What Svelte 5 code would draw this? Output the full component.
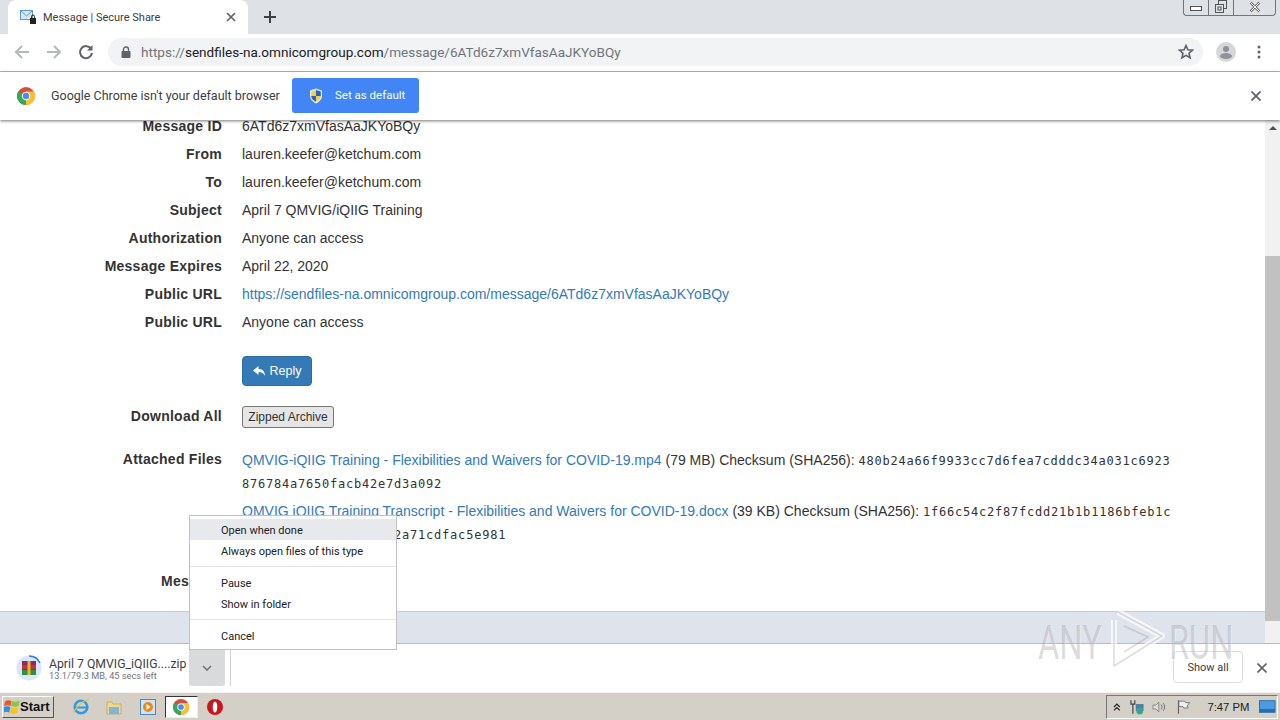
<script lang="ts">
	const rows = [
		{ label: 'From', value: 'lauren.keefer@ketchum.com' },
		{ label: 'To', value: 'lauren.keefer@ketchum.com' },
		{ label: 'Subject', value: 'April 7 QMVIG/iQIIG Training' },
		{ label: 'Authorization', value: 'Anyone can access' },
		{ label: 'Message Expires', value: 'April 22, 2020' },
		{ label: 'Public URL', value: 'https://sendfiles-na.omnicomgroup.com/message/6ATd6z7xmVfasAaJKYoBQy', link: true },
		{ label: 'Public URL', value: 'Anyone can access' }
	];
</script>

<div class="screen">
	<div class="tabstrip">
		<div class="tab">
			<svg class="favicon" width="18" height="16" viewBox="0 0 18 16">
				<rect x="0.5" y="1.5" width="12" height="9" fill="#d6e8f5" stroke="#5b9bc8" />
				<path d="M1 2l5.500 5 5.500-5" fill="none" stroke="#5b9bc8" />
				<rect x="10" y="9" width="6" height="6" fill="#222" />
				<path d="M11.500 9V7.500a1.500 1.500 0 0 1 3 0V9" fill="none" stroke="#222" />
			</svg>
			<span class="tab-title">Message | Secure Share</span>
			<svg class="tab-close" width="10" height="10" viewBox="0 0 10 10">
				<path d="M1 1l8 8M9 1l-8 8" stroke="#5f6368" stroke-width="1.700" />
			</svg>
		</div>
		<svg class="newtab" width="12" height="12" viewBox="0 0 12 12">
			<path d="M6 0v12M0 6h12" stroke="#3c4043" stroke-width="2" />
		</svg>
		<div class="winctl">
			<span class="winbtn min"><svg width="12" height="6" viewBox="0 0 12 6"><rect x="0.500" y="0.500" width="11" height="4" fill="#fff" stroke="#555" /></svg></span>
			<span class="winbtn max"><svg width="14" height="14" viewBox="0 0 14 14"><rect x="4.500" y="0.500" width="8" height="8" fill="none" stroke="#555" /><rect x="1.500" y="4.500" width="8" height="8" fill="#dee1e6" stroke="#555" /><rect x="4" y="7" width="3" height="3" fill="none" stroke="#555" /></svg></span>
			<span class="winbtn cls"><svg width="12" height="12" viewBox="0 0 12 12"><path d="M1.500 1.500l9 9M10.500 1.500l-9 9" stroke="#777" stroke-width="2.500" /><path d="M1.500 1.500l9 9M10.500 1.500l-9 9" stroke="#fff" stroke-width="1" /></svg></span>
		</div>
	</div>

	<div class="toolbar">
		<svg class="navicon" width="16" height="16" viewBox="0 0 16 16"><path d="M15 8H2M8 2L2 8l6 6" fill="none" stroke="#b4b7bb" stroke-width="2" /></svg>
		<svg class="navicon" width="16" height="16" viewBox="0 0 16 16"><path d="M1 8h13M8 2l6 6-6 6" fill="none" stroke="#b4b7bb" stroke-width="2" /></svg>
		<svg class="navicon" width="16" height="16" viewBox="0 0 16 16"><path d="M13.300 5.200A6 6 0 1 0 14 9" fill="none" stroke="#5f6368" stroke-width="2" /><path d="M14.500 1v5.500H9z" fill="#5f6368" /></svg>
		<div class="omnibox">
			<svg width="10" height="12" viewBox="0 0 10 12"><rect x="0.500" y="5" width="9" height="7" rx="1" fill="#5f6368" /><path d="M2.500 5V3.500a2.500 2.500 0 0 1 5 0V5" fill="none" stroke="#5f6368" stroke-width="1.400" /></svg>
			<span class="url"><span class="dim">https://</span>sendfiles-na.omnicomgroup.com<span class="dim">/message/6ATd6z7xmVfasAaJKYoBQy</span></span>
			<svg class="star" width="16" height="16" viewBox="0 0 16 16"><path d="M8 1.500l1.900 4.300 4.600.4-3.500 3 1.100 4.600L8 11.400 3.900 13.800 5 9.200l-3.500-3 4.600-.4z" fill="none" stroke="#5f6368" stroke-width="1.600" /></svg>
		</div>
		<svg class="avatar" width="20" height="20" viewBox="0 0 20 20"><circle cx="10" cy="10" r="10" fill="#d5d7da" /><circle cx="10" cy="7" r="3" fill="#8f9296" /><ellipse cx="10" cy="14" rx="6" ry="3" fill="#8f9296" /></svg>
		<svg class="kebab" width="4" height="14" viewBox="0 0 4 14"><circle cx="2" cy="2" r="1.500" fill="#5f6368" /><circle cx="2" cy="7" r="1.500" fill="#5f6368" /><circle cx="2" cy="12" r="1.500" fill="#5f6368" /></svg>
	</div>

	<div class="infobar">
		<svg class="chrome-logo" width="18" height="18" viewBox="0 0 18 18">
			<circle cx="9" cy="9" r="9" fill="#dd4b39" />
			<path d="M9 9L1.200 4.500A9 9 0 0 0 9 18z" fill="#3aa757" />
			<path d="M9 9l0 9A9 9 0 0 0 16.800 4.500H9z" fill="#fbc02d" />
			<circle cx="9" cy="9" r="4.200" fill="#fff" />
			<circle cx="9" cy="9" r="3.200" fill="#4a8cf0" />
		</svg>
		<span class="info-text">Google Chrome isn't your default browser</span>
		<button class="default-btn">
			<svg width="14" height="16" viewBox="0 0 14 16"><path d="M7 0.500l6 2v5c0 4-3 6.500-6 8-3-1.500-6-4-6-8v-5z" fill="#e9edf5" /><path d="M7 2l4.800 1.600V8H7z" fill="#2b62c4" /><path d="M2.200 8H7v5.800C4.500 12.500 2.200 10.800 2.200 8z" fill="#2b62c4" /><path d="M7 2v6H2.200V3.600zM7 8h4.800c0 2.800-2.300 4.500-4.800 5.800z" fill="#f4d03f" /></svg>
			<span class="default-label">Set as default</span>
		</button>
		<svg class="info-close" width="10" height="10" viewBox="0 0 10 10"><path d="M0.500 0.500l9 9M9.500 0.500l-9 9" stroke="#5f6368" stroke-width="1.800" /></svg>
	</div>

	<div class="viewport">
		<div class="page">
			<div class="content">
				<div class="row"><div class="label">Message ID</div><div class="value">6ATd6z7xmVfasAaJKYoBQy</div></div>
				{#each rows as row}
					<div class="row">
						<div class="label">{row.label}</div>
						<div class="value">
							{#if row.link}<a href="#top">{row.value}</a>{:else}{row.value}{/if}
						</div>
					</div>
				{/each}
				<div class="row reply-row">
					<div class="label"></div>
					<div class="value">
						<button class="reply">
							<svg width="13" height="11" viewBox="0 0 13 11"><path d="M5.500 0L0 4.500 5.500 9V6.200c3 0 5 .6 6.500 3.800 0-4.500-2.500-7-6.500-7z" fill="#fff" /></svg>
							Reply
						</button>
					</div>
				</div>
				<div class="row zip-row">
					<div class="label">Download All</div>
					<div class="value"><button class="zip">Zipped Archive</button></div>
				</div>
				<div class="row files-row">
					<div class="label">Attached Files</div>
					<div class="value files">
						<p><a href="#top">QMVIG-iQIIG Training - Flexibilities and Waivers for COVID-19.mp4</a> (79 MB) Checksum (SHA256): <code>480b24a66f9933cc7d6fea7cdddc34a031c6923876784a7650facb42e7d3a092</code></p>
						<p><a href="#top">QMVIG iQIIG Training Transcript - Flexibilities and Waivers for COVID-19.docx</a> (39 KB) Checksum (SHA256): <code>1f66c54c2f87fcdd21b1b1186bfeb1cd8e64a90b37c1e5f0a42a71cdfac5e981</code></p>
					</div>
				</div>
				<div class="row message-row">
					<div class="label">Message</div>
					<div class="value"></div>
				</div>
			</div>
			<div class="page-footer"></div>
		</div>
		<div class="scrollbar">
			<span class="arrow"></span>
			<span class="thumb"></span>
		</div>
	</div>

	<div class="downloads">
		<svg class="rar" width="26" height="26" viewBox="0 0 26 26">
			<circle cx="13" cy="13" r="12.500" fill="#d9e6fb" />
			<path d="M13 1a12 12 0 0 1 11 7" fill="none" stroke="#3b78d8" stroke-width="1.500" />
			<rect x="6" y="6" width="14" height="14" fill="#8a2b63" />
			<rect x="6" y="10" width="14" height="4" fill="#c0392b" />
			<rect x="6" y="15" width="14" height="5" fill="#2f8f46" />
			<rect x="11.500" y="6" width="3" height="14" fill="#e8b33a" />
		</svg>
		<div class="dl-text">
			<div class="dl-name">April 7 QMVIG_iQIIG....zip</div>
			<div class="dl-status">13.1/79.3 MB, 45 secs left</div>
		</div>
		<div class="dl-caret">
			<svg width="10" height="6" viewBox="0 0 10 6"><path d="M1 1l4 4 4-4" fill="none" stroke="#70757a" stroke-width="1.600" /></svg>
		</div>
		<div class="dl-sep"></div>
		<button class="show-all">Show all</button>
		<svg class="dl-close" width="10" height="10" viewBox="0 0 10 10"><path d="M0.500 0.500l9 9M9.500 0.500l-9 9" stroke="#5f6368" stroke-width="1.600" /></svg>
	</div>

	<div class="taskbar">
		<button class="start">
			<svg width="16" height="15" viewBox="0 0 16 15"><path d="M1 2.500C3 1 5 1 7.500 2l-1 5C4.500 6 3 6 0 7z" fill="#e8562a" /><path d="M8 2c2.500 1 4.500 1 7.500-.5l-1 5.500c-2.500 1-4.500 1-7.500 0z" fill="#8cc63f" /><path d="M0 8c2.500-1 4-1 6.300 0l-1 5.500C3 12.500 2 12.500 0 13.500z" fill="#2f8fe0" /><path d="M7 8.500c2.500 1 4.500 1 7 0l-1 5.500c-2.500 1-4.500 1-7 0z" fill="#f6c21c" /></svg>
			<span>Start</span>
		</button>
		<div class="task-icons">
			<span class="task"><svg width="18" height="18" viewBox="0 0 18 18"><circle cx="9" cy="9" r="6.300" fill="none" stroke="#2f9be0" stroke-width="2.600" /><path d="M4 9.500h10" stroke="#2f9be0" stroke-width="2" /><path d="M1 15C5 8 11 3 17 1" fill="none" stroke="#e8c04a" stroke-width="1.300" /></svg></span>
			<span class="task"><svg width="16" height="16" viewBox="0 0 16 16"><path d="M1 3h5l1 2h8v10H1z" fill="#f3d98b" stroke="#b9a05a" stroke-width="0.700" /><rect x="3" y="8" width="10" height="7" fill="#7fb7d9" /></svg></span>
			<span class="task"><svg width="16" height="16" viewBox="0 0 16 16"><rect x="0.500" y="0.500" width="15" height="15" fill="#cfe3f5" stroke="#4a88bf" /><circle cx="8" cy="8" r="5" fill="#e88a1a" /><path d="M6.500 5l4 3-4 3z" fill="#fff" /></svg></span>
			<span class="task active"><svg width="16" height="16" viewBox="0 0 18 18"><circle cx="9" cy="9" r="9" fill="#dd4b39" /><path d="M9 9L1.200 4.500A9 9 0 0 0 9 18z" fill="#3aa757" /><path d="M9 9l0 9A9 9 0 0 0 16.800 4.500H9z" fill="#fbc02d" /><circle cx="9" cy="9" r="4.200" fill="#fff" /><circle cx="9" cy="9" r="3.200" fill="#4a8cf0" /></svg></span>
			<span class="task"><svg width="16" height="16" viewBox="0 0 16 16"><circle cx="8" cy="8" r="8" fill="#c8161d" /><ellipse cx="8" cy="8" rx="2.300" ry="5.500" fill="#fff" /></svg></span>
		</div>
		<div class="tray">
			<svg width="8" height="8" viewBox="0 0 8 8"><path d="M1 4l3-3 3 3M1 7.500l3-3 3 3" fill="none" stroke="#222" stroke-width="1.200" /></svg>
			<svg width="16" height="16" viewBox="0 0 16 16"><path d="M2 1v4h4V1M4 5v10" fill="none" stroke="#444" stroke-width="1.200" /><rect x="7" y="5" width="8" height="7" fill="#4a7fa8" /><circle cx="11" cy="12" r="3.500" fill="#37a58c" /></svg>
			<svg width="16" height="14" viewBox="0 0 16 14"><path d="M1 5h3l3-3v10L4 9H1z" fill="#ddd" stroke="#777" stroke-width="0.800" /><path d="M9.500 4.500a4 4 0 0 1 0 5M11.500 3a6 6 0 0 1 0 8" fill="none" stroke="#777" /></svg>
			<svg width="16" height="16" viewBox="0 0 16 16"><path d="M2.500 1v14" stroke="#555" /><path d="M3 2h6l1 1.500h4L11.500 7l1 2H8L7 7.500H3z" fill="#eee" stroke="#666" stroke-width="0.800" /></svg>
			<span class="clock">7:47 PM</span>
			<svg width="17" height="13" viewBox="0 0 17 13"><rect width="17" height="13" fill="#2a6cb0" /><rect x="1" y="1" width="15" height="8" fill="#4d9be0" /></svg>
		</div>
	</div>

	<div class="menu">
		<div class="item hot">Open when done</div>
		<div class="item">Always open files of this type</div>
		<div class="menu-sep"></div>
		<div class="item">Pause</div>
		<div class="item">Show in folder</div>
		<div class="menu-sep"></div>
		<div class="item">Cancel</div>
	</div>

	<div class="watermark">
		<span class="wm-word">ANY</span>
		<svg class="wm-mark" width="62" height="62" viewBox="0 0 62 62">
			<path d="M14 4l44 24-48 30V12" fill="none" stroke="#fff" stroke-opacity="0.700" stroke-width="6" stroke-linejoin="round" />
			<path d="M14 4l44 24-48 30V12M20 18l24 11-24 15" fill="none" stroke="#8d8f94" stroke-opacity="0.300" stroke-width="1.500" stroke-linejoin="round" />
		</svg>
		<span class="wm-word">RUN</span>
	</div>
</div>

<style>
	:global(body) {
		margin: 0;
	}

	.screen {
		position: relative;
		width: 1280px;
		height: 720px;
		overflow: hidden;
		display: flex;
		flex-direction: column;
		background: #fff;
		font-family: 'Liberation Sans', Arial, sans-serif;
	}

	.tabstrip {
		position: relative;
		flex: none;
		height: 34px;
		background: #dee1e6;
		display: flex;
		align-items: flex-end;
		padding-left: 8px;
	}

	.tab {
		width: 240px;
		height: 34px;
		background: #fff;
		border-radius: 8px 8px 0 0;
		display: flex;
		align-items: center;
		padding: 0 12px;
		box-sizing: border-box;
		gap: 5px;
	}

	.favicon {
		flex: none;
	}

	.tab-title {
		flex: 1;
		font: 11px Roboto, sans-serif;
		color: #3c4043;
	}

	.tab-close {
		flex: none;
	}

	.newtab {
		align-self: center;
		margin-left: 16px;
	}

	.winctl {
		position: absolute;
		top: -1px;
		right: 4px;
		height: 17px;
		width: 93px;
		display: flex;
		box-sizing: border-box;
		border: 1px solid #70757a;
		border-top: 0;
		border-radius: 0 0 4px 4px;
	}

	.winbtn {
		display: flex;
		align-items: center;
		justify-content: center;
	}

	.min {
		width: 25px;
		border-right: 1px solid #70757a;
		padding-top: 3px;
		box-sizing: border-box;
	}

	.max {
		width: 25px;
		border-right: 1px solid #70757a;
		box-sizing: border-box;
	}

	.cls {
		flex: 1;
	}

	.toolbar {
		flex: none;
		height: 38px;
		box-sizing: border-box;
		background: #fff;
		border-bottom: 1px solid #b9babb;
		display: flex;
		align-items: center;
		padding: 0 14px 1px;
	}

	.navicon {
		flex: none;
		margin-right: 16px;
	}

	.omnibox {
		flex: 1;
		height: 28px;
		margin-left: -2px;
		border-radius: 14px;
		background: #f1f3f4;
		display: flex;
		align-items: center;
		padding: 0 9px 0 13px;
		gap: 8px;
	}

	.url {
		flex: 1;
		font: 13.550px Roboto, sans-serif;
		color: #202124;
		margin-left: 2px;
	}

	.dim {
		color: #70757a;
	}

	.avatar {
		flex: none;
		margin-left: 13px;
	}

	.kebab {
		flex: none;
		margin-left: 21px;
		margin-right: 5px;
	}

	.infobar {
		flex: none;
		height: 48px;
		box-sizing: border-box;
		display: flex;
		align-items: center;
		padding: 0 18px 1px 17px;
		background: #fff;
		box-shadow: 0 1px 3px rgba(0, 0, 0, 0.55);
		position: relative;
		z-index: 1;
	}

	.chrome-logo {
		flex: none;
	}

	.info-text {
		margin-left: 16px;
		width: 228px;
		white-space: nowrap;
		font: 12.500px Roboto, sans-serif;
		color: #3c4043;
	}

	.default-btn {
		margin-left: 13px;
		width: 127px;
		height: 35px;
		border: 0;
		border-radius: 3px;
		background: #4285f4;
		color: #fff;
		font: 11.500px Roboto, sans-serif;
		display: flex;
		align-items: center;
		padding: 0 0 0 17px;
		gap: 12px;
	}

	.default-label {
		margin-bottom: 2px;
	}

	.info-close {
		margin-left: auto;
		margin-right: 1px;
	}

	.viewport {
		flex: 1;
		min-height: 0;
		display: flex;
		overflow: hidden;
	}

	.page {
		flex: 1;
		display: flex;
		flex-direction: column;
		min-width: 0;
	}

	.content {
		flex: 1;
		margin-top: -8px;
		font-size: 14px;
		color: #333;
	}

	.row {
		display: flex;
		min-height: 28px;
		line-height: 28px;
	}

	.label {
		flex: none;
		width: 222px;
		text-align: right;
		font-weight: 700;
		letter-spacing: 0.25px;
	}

	.value {
		margin-left: 20px;
		flex: 1;
		min-width: 0;
	}

	a {
		color: #337ab7;
		text-decoration: none;
	}

	.reply-row {
		margin-top: 20px;
		line-height: 1;
	}

	.reply {
		width: 70px;
		height: 30px;
		background: #337ab7;
		border: 1px solid #2e6da4;
		border-radius: 4px;
		color: #fff;
		font: 12.500px 'Liberation Sans', sans-serif;
		display: flex;
		align-items: center;
		justify-content: center;
		gap: 4px;
		padding: 0;
	}

	.zip-row {
		margin-top: 17px;
	}

	.zip-row .label,
	.files-row .label {
		line-height: 26px;
	}

	.zip-row .value {
		display: flex;
		align-items: flex-start;
	}

	.zip {
		width: 92px;
		height: 22px;
		margin-top: 3px;
		padding: 0;
		background: #e6e6e6;
		border: 1px solid #767676;
		border-radius: 3px;
		font: 12px 'Liberation Sans', sans-serif;
		color: #333;
	}

	.files-row {
		margin-top: 15px;
	}

	.files {
		width: 933px;
		flex: none;
		line-height: 23px;
		padding-top: 3px;
	}

	.files p {
		margin: 0 0 5px;
	}

	code {
		font-family: 'DejaVu Sans Mono', monospace;
		font-size: 12px;
		line-height: 1;
		letter-spacing: 0.78px;
		word-break: break-all;
	}

	.message-row {
		margin-top: 16px;
	}

	.page-footer {
		flex: none;
		height: 32px;
		box-sizing: border-box;
		background: #dfe3ec;
		border-top: 1px solid #c9ccd1;
	}

	.scrollbar {
		flex: none;
		width: 15px;
		background: #f1f1f1;
		display: flex;
		flex-direction: column;
		align-items: center;
	}

	.arrow {
		margin-top: 6px;
		width: 0;
		height: 0;
		border: 4px solid transparent;
		border-top: 0;
		border-bottom: 4px solid #505050;
	}

	.thumb {
		margin-top: 126px;
		width: 100%;
		height: 365px;
		background: #c1c1c1;
	}

	.downloads {
		flex: none;
		height: 49px;
		box-sizing: border-box;
		background: #fff;
		border-top: 1px solid #b9babb;
		display: flex;
		align-items: center;
		padding-left: 16px;
		position: relative;
	}

	.rar {
		flex: none;
	}

	.dl-text {
		margin-left: 7px;
		width: 140px;
		padding-top: 3px;
		white-space: nowrap;
	}

	.dl-name {
		font: 12.250px/13px Roboto, sans-serif;
		color: #3c4043;
	}

	.dl-status {
		font: 9.250px/10px Roboto, sans-serif;
		color: #70757a;
	}

	.dl-caret {
		width: 36px;
		height: 36px;
		background: #d9dadb;
		border-radius: 0 0 3px 3px;
		display: flex;
		align-items: center;
		justify-content: center;
	}

	.dl-sep {
		width: 1px;
		height: 36px;
		margin-left: 5px;
		background: #d0d2d4;
	}

	.show-all {
		margin-left: auto;
		margin-bottom: 2px;
		width: 70px;
		height: 32px;
		border: 1px solid #dadce0;
		border-radius: 4px;
		background: #fff;
		font: 11px Roboto, sans-serif;
		color: #3c4043;
		padding: 0;
	}

	.dl-close {
		margin: 0 13px 0 14px;
		flex: none;
	}

	.taskbar {
		flex: none;
		height: 28px;
		box-sizing: border-box;
		background: #d4d0c8;
		border-top: 1px solid #f5f4f0;
		display: flex;
		align-items: center;
		padding-left: 2px;
	}

	.start {
		width: 52px;
		height: 22px;
		padding: 0 0 0 1px;
		background: #d4d0c8;
		border: 1px solid;
		border-color: #fff #555 #555 #fff;
		display: flex;
		align-items: center;
		gap: 0;
		font: 700 13px 'Liberation Sans', sans-serif;
		color: #111;
	}

	.task-icons {
		display: flex;
		align-items: center;
		margin-left: 10px;
	}

	.task {
		width: 33.500px;
		height: 22px;
		display: flex;
		align-items: center;
		justify-content: center;
		box-sizing: border-box;
	}

	.active {
		background: #fff;
		border: 1px solid;
		border-color: #333 #eee #eee #333;
	}

	.tray {
		margin-left: auto;
		margin-right: 2px;
		width: 172px;
		height: 24px;
		box-sizing: border-box;
		border: 1px solid;
		border-color: #777 #fff #fff #777;
		display: flex;
		align-items: center;
		padding: 0 1px 0 6px;
		gap: 8px;
	}

	.clock {
		margin-left: 8px;
		margin-right: 2px;
		white-space: nowrap;
		font: 11.300px 'Liberation Sans', sans-serif;
		color: #222;
	}

	.menu {
		position: absolute;
		left: 189px;
		top: 515px;
		width: 208px;
		height: 135px;
		box-sizing: border-box;
		background: #fff;
		border: 1px solid #bfc1c4;
		padding-top: 3px;
		z-index: 3;
		font: 11px Roboto, sans-serif;
		color: #202124;
	}

	.item {
		height: 21px;
		line-height: 23px;
		padding-left: 31px;
	}

	.hot {
		background: #e8e9ec;
	}

	.menu-sep {
		height: 1px;
		margin: 5px 0;
		background: #e4e5e7;
	}

	.watermark {
		position: absolute;
		left: 1038px;
		top: 608px;
		height: 62px;
		display: flex;
		align-items: center;
		z-index: 2;
		pointer-events: none;
	}

	.wm-word {
		display: inline-block;
		width: 66px;
		margin-top: 6px;
		transform: scaleX(0.68);
		transform-origin: left center;
		font: 400 48px Roboto, sans-serif;
		color: rgba(130, 132, 138, 0.28);
		text-shadow: 1px 1px 0 rgba(255, 255, 255, 0.35);
		white-space: nowrap;
	}

	.wm-mark {
		flex: none;
		margin-right: 3px;
	}
</style>
